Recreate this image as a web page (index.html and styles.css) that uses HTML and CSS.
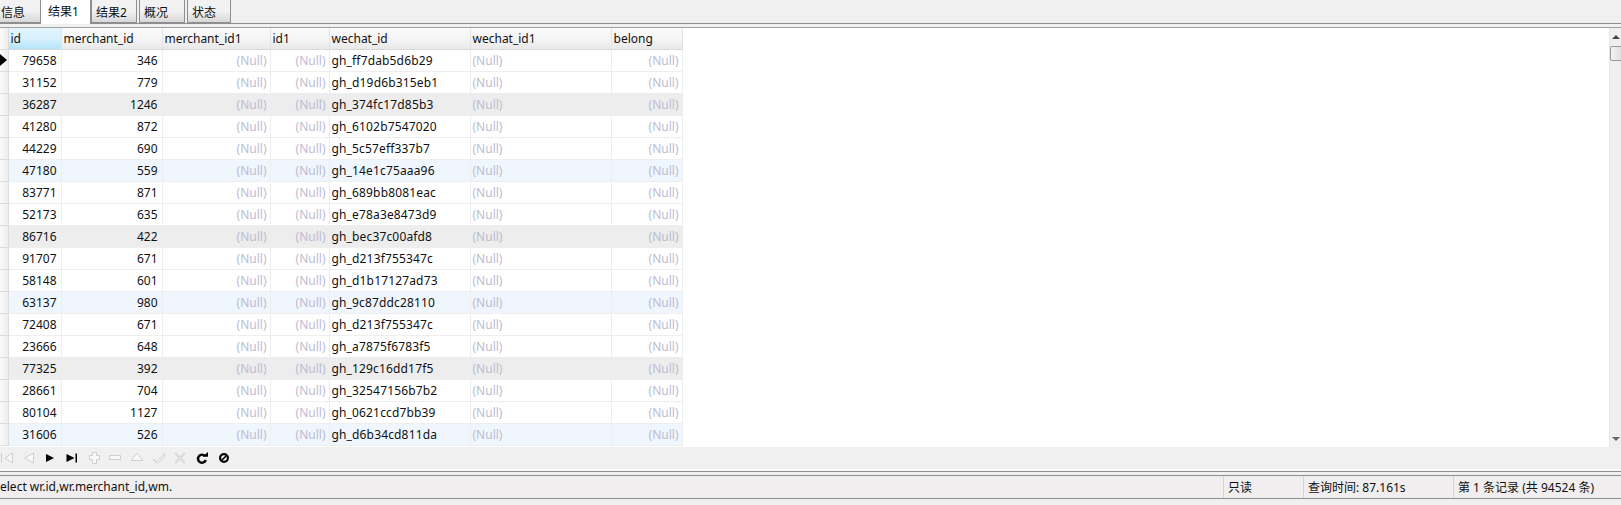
FILE: index.html
```html
<!DOCTYPE html>
<html lang="zh">
<head>
    <meta charset="UTF-8">
    <title>结果1</title>
    <link rel="stylesheet" href="styles.css">
</head>
<body>
    <div class="tabs">
        <div class="tab tab-first">信息</div>
        <div class="tab active">结果1</div>
        <div class="tab">结果2</div>
        <div class="tab">概况</div>
        <div class="tab tab-last">状态</div>
    </div>

    <div class="grid-wrap">
        <div class="grid-area">
            <table class="grid">
                <colgroup>
                    <col class="c-mark"><col class="c-id"><col class="c-mid"><col class="c-mid1"><col class="c-id1"><col class="c-wx"><col class="c-wx1"><col class="c-belong">
                </colgroup>
                <thead>
                    <tr><th class="mark"></th><th class="sorted">id</th><th>merchant_id</th><th>merchant_id1</th><th>id1</th><th>wechat_id</th><th>wechat_id1</th><th>belong</th></tr>
                </thead>
                <tbody>
                    <tr><td class="mark current"><span class="arrow"></span></td><td class="num">79658</td><td class="num">346</td><td class="null">(Null)</td><td class="null">(Null)</td><td class="wx">gh_ff7dab5d6b29</td><td class="null left">(Null)</td><td class="null">(Null)</td></tr>
                    <tr><td class="mark"></td><td class="num">31152</td><td class="num">779</td><td class="null">(Null)</td><td class="null">(Null)</td><td class="wx">gh_d19d6b315eb1</td><td class="null left">(Null)</td><td class="null">(Null)</td></tr>
                    <tr class="gray"><td class="mark"></td><td class="num">36287</td><td class="num">1246</td><td class="null">(Null)</td><td class="null">(Null)</td><td class="wx">gh_374fc17d85b3</td><td class="null left">(Null)</td><td class="null">(Null)</td></tr>
                    <tr><td class="mark"></td><td class="num">41280</td><td class="num">872</td><td class="null">(Null)</td><td class="null">(Null)</td><td class="wx">gh_6102b7547020</td><td class="null left">(Null)</td><td class="null">(Null)</td></tr>
                    <tr><td class="mark"></td><td class="num">44229</td><td class="num">690</td><td class="null">(Null)</td><td class="null">(Null)</td><td class="wx">gh_5c57eff337b7</td><td class="null left">(Null)</td><td class="null">(Null)</td></tr>
                    <tr class="blue"><td class="mark"></td><td class="num">47180</td><td class="num">559</td><td class="null">(Null)</td><td class="null">(Null)</td><td class="wx">gh_14e1c75aaa96</td><td class="null left">(Null)</td><td class="null">(Null)</td></tr>
                    <tr><td class="mark"></td><td class="num">83771</td><td class="num">871</td><td class="null">(Null)</td><td class="null">(Null)</td><td class="wx">gh_689bb8081eac</td><td class="null left">(Null)</td><td class="null">(Null)</td></tr>
                    <tr><td class="mark"></td><td class="num">52173</td><td class="num">635</td><td class="null">(Null)</td><td class="null">(Null)</td><td class="wx">gh_e78a3e8473d9</td><td class="null left">(Null)</td><td class="null">(Null)</td></tr>
                    <tr class="gray"><td class="mark"></td><td class="num">86716</td><td class="num">422</td><td class="null">(Null)</td><td class="null">(Null)</td><td class="wx">gh_bec37c00afd8</td><td class="null left">(Null)</td><td class="null">(Null)</td></tr>
                    <tr><td class="mark"></td><td class="num">91707</td><td class="num">671</td><td class="null">(Null)</td><td class="null">(Null)</td><td class="wx">gh_d213f755347c</td><td class="null left">(Null)</td><td class="null">(Null)</td></tr>
                    <tr><td class="mark"></td><td class="num">58148</td><td class="num">601</td><td class="null">(Null)</td><td class="null">(Null)</td><td class="wx">gh_d1b17127ad73</td><td class="null left">(Null)</td><td class="null">(Null)</td></tr>
                    <tr class="blue"><td class="mark"></td><td class="num">63137</td><td class="num">980</td><td class="null">(Null)</td><td class="null">(Null)</td><td class="wx">gh_9c87ddc28110</td><td class="null left">(Null)</td><td class="null">(Null)</td></tr>
                    <tr><td class="mark"></td><td class="num">72408</td><td class="num">671</td><td class="null">(Null)</td><td class="null">(Null)</td><td class="wx">gh_d213f755347c</td><td class="null left">(Null)</td><td class="null">(Null)</td></tr>
                    <tr><td class="mark"></td><td class="num">23666</td><td class="num">648</td><td class="null">(Null)</td><td class="null">(Null)</td><td class="wx">gh_a7875f6783f5</td><td class="null left">(Null)</td><td class="null">(Null)</td></tr>
                    <tr class="gray"><td class="mark"></td><td class="num">77325</td><td class="num">392</td><td class="null">(Null)</td><td class="null">(Null)</td><td class="wx">gh_129c16dd17f5</td><td class="null left">(Null)</td><td class="null">(Null)</td></tr>
                    <tr><td class="mark"></td><td class="num">28661</td><td class="num">704</td><td class="null">(Null)</td><td class="null">(Null)</td><td class="wx">gh_32547156b7b2</td><td class="null left">(Null)</td><td class="null">(Null)</td></tr>
                    <tr><td class="mark"></td><td class="num">80104</td><td class="num">1127</td><td class="null">(Null)</td><td class="null">(Null)</td><td class="wx">gh_0621ccd7bb39</td><td class="null left">(Null)</td><td class="null">(Null)</td></tr>
                    <tr class="blue"><td class="mark"></td><td class="num">31606</td><td class="num">526</td><td class="null">(Null)</td><td class="null">(Null)</td><td class="wx">gh_d6b34cd811da</td><td class="null left">(Null)</td><td class="null">(Null)</td></tr>
                </tbody>
            </table>
        </div>
        <div class="scrollbar">
            <span class="sb-up"></span>
            <span class="sb-thumb"></span>
            <span class="sb-down"></span>
        </div>
    </div>

    <div class="toolbar">
        <svg class="tool" viewBox="0 0 14 14"><path d="M1.500 2v10M12.500 2L5 7l7.500 5z" fill="#f8f8f8" stroke="#cfcfcf"/></svg>
        <svg class="tool" viewBox="0 0 14 14"><path d="M11.500 2L2.500 7l9 5z" fill="#f8f8f8" stroke="#cfcfcf"/></svg>
        <svg class="tool" viewBox="0 0 14 14"><path d="M3 3l8 4-8 4z" fill="#000"/></svg>
        <svg class="tool" viewBox="0 0 14 14"><path d="M1.500 3l8 4-8 4zM10.500 2.500h1.500v9h-1.500z" fill="#000"/></svg>
        <svg class="tool" viewBox="0 0 14 14"><path d="M5.500 1.500h4v3h3v4h-3v4h-4v-4h-3v-4h3z" fill="#f8f8f8" stroke="#cfcfcf"/></svg>
        <svg class="tool" viewBox="0 0 14 14"><path d="M1.500 4.500h11v4h-11z" fill="#f8f8f8" stroke="#cfcfcf"/></svg>
        <svg class="tool" viewBox="0 0 14 14"><path d="M7 2.500l6 7H1z" fill="#f8f8f8" stroke="#cfcfcf"/></svg>
        <svg class="tool" viewBox="0 0 14 14"><path d="M1 7.500l3.500 3.500L13 2.500l-1 3.500-6.500 6.500L1.500 9" fill="#f8f8f8" stroke="#cfcfcf"/></svg>
        <svg class="tool" viewBox="0 0 14 14"><path d="M2 2l10 10M12 2L2 12" fill="none" stroke="#d0d0d0" stroke-width="2"/><path d="M2 2l10 10M12 2L2 12" fill="none" stroke="#f8f8f8" stroke-width="0.600"/></svg>
        <svg class="tool" viewBox="0 0 14 14"><path d="M10 5A4 4 0 1 0 10.800 9" fill="none" stroke="#000" stroke-width="2.400"/><path d="M7.500 5.800h5.500V1z" fill="#000"/></svg>
        <svg class="tool" viewBox="0 0 14 14"><circle cx="7" cy="7" r="3.900" fill="none" stroke="#000" stroke-width="2.200"/><path d="M4.500 9.500l5-5" stroke="#000" stroke-width="1.600"/></svg>
    </div>

    <div class="statusbar">
        <div class="pane pane-sql">elect wr.id,wr.merchant_id,wm.</div>
        <div class="pane pane-ro">只读</div>
        <div class="pane pane-time">查询时间: 87.161s</div>
        <div class="pane pane-count">第 1 条记录 (共 94524 条)</div>
    </div>
</body>
</html>
```

FILE: styles.css
```css
* {
    margin: 0;
    padding: 0;
    box-sizing: border-box;
}

html, body {
    height: 505px;
    overflow: hidden;
}

body {
    background: #f0f0f0;
    color: #111;
    font-family: "Noto Sans", "Noto Sans CJK SC", sans-serif;
    font-size: 12px;
}

.tabs {
    display: flex;
    height: 24px;
    border-bottom: 1px solid #8e8e8e;
}

.tab {
    width: 46px;
    height: 23px;
    margin-right: 2px;
    padding: 3px 0 0 4px;
    border: 1px solid #8e8e8e;
    border-top: none;
    background: linear-gradient(#f2f2f2, #f2f2f2 50%, #d8d8d8);
    font-size: 12px;
}

.tab-first {
    width: 40px;
    margin-right: 0;
    padding-left: 1px;
    border-left: none;
    border-right: none;
}

.tab.active {
    width: 51px;
    height: 24px;
    margin-right: 0;
    padding: 2px 0 0 7px;
    background: #fff;
    border-bottom: none;
}

.tab-last {
    width: 44px;
}

.grid-wrap {
    display: flex;
    height: 420px;
    margin-top: 3px;
    background: #fff;
    border-top: 1px solid #a0a0a0;
}

.grid-area {
    flex: 1;
    overflow: hidden;
}

.grid {
    width: 682px;
    table-layout: fixed;
    border-collapse: collapse;
}

.c-mark { width: 8px; }
.c-id { width: 53px; }
.c-mid { width: 101px; }
.c-mid1 { width: 108px; }
.c-id1 { width: 59px; }
.c-wx { width: 141px; }
.c-wx1 { width: 141px; }
.c-belong { width: 71px; }

.grid th {
    height: 21px;
    padding: 0 2px;
    text-align: left;
    font-weight: normal;
    font-size: 12px;
    background: linear-gradient(#fafafa, #f5f5f5 50%, #e8e8e8);
    border-right: 1px solid #e4e4e4;
    border-bottom: 1px solid #d8d8d8;
}

.grid th.sorted {
    background: linear-gradient(#e2f5fe, #d8f0fc 50%, #b4e4fb);
}

.grid td {
    height: 22px;
    padding: 0 3px;
    overflow: hidden;
    white-space: nowrap;
    border-right: 1px solid #eeeeee;
    border-bottom: 1px solid #eeeeee;
}

.grid td.mark, .grid th.mark {
    padding: 0;
    background: linear-gradient(90deg, #fafafa, #ececec);
    border-right: 1px solid #dcdcdc;
    border-bottom: 1px solid #dcdcdc;
}

.grid td.num {
    padding-right: 4px;
    text-align: right;
}

.grid td.wx {
    padding-left: 2px;
    letter-spacing: 0.150px;
}

.grid td.null {
    text-align: right;
    color: #bcbcd2;
}

.grid td.left {
    padding-left: 2px;
    text-align: left;
}

.gray td {
    background: #ededed;
}

.blue td {
    background: #eff6fd;
}

.arrow {
    display: block;
    width: 0;
    height: 0;
    border-left: 7px solid #000;
    border-top: 6px solid transparent;
    border-bottom: 6px solid transparent;
}

.scrollbar {
    position: relative;
    width: 12px;
    background: #efefef;
    border-left: 1px solid #e6e6e6;
}

.sb-up, .sb-down {
    position: absolute;
    left: 2px;
    width: 0;
    height: 0;
    border-left: 4px solid transparent;
    border-right: 4px solid transparent;
}

.sb-up {
    top: 7px;
    border-bottom: 4px solid #444;
}

.sb-down {
    bottom: 6px;
    border-top: 4px solid #666;
}

.sb-thumb {
    position: absolute;
    top: 18px;
    left: 0;
    width: 14px;
    height: 15px;
    border: 1px solid #9a9a9a;
    border-radius: 2px;
    background: linear-gradient(90deg, #f4f4f4, #dcdcdc);
}

.toolbar {
    display: flex;
    align-items: center;
    height: 25px;
    margin-left: -4px;
    padding-bottom: 3px;
    border-bottom: 1px solid #8e8e8e;
    box-shadow: inset 0 -2px 0 #fafafa;
}

.tool {
    flex: none;
    width: 14px;
    height: 14px;
    margin: 0 3.850px;
}

.statusbar {
    display: flex;
    align-items: center;
    height: 24px;
    margin-top: 3px;
    border-top: 1px solid #8e8e8e;
    border-bottom: 1px solid #8e8e8e;
    background: #f0eeee;
}

.pane {
    height: 100%;
    padding: 2px 0 0 4px;
    border-left: 1px solid #d4d4d4;
    white-space: nowrap;
}

.pane-sql {
    width: 1223px;
    padding-left: 0;
    border-left: none;
}

.pane-ro { width: 80px; }
.pane-time { width: 150px; }
.pane-count { flex: 1; }
```
